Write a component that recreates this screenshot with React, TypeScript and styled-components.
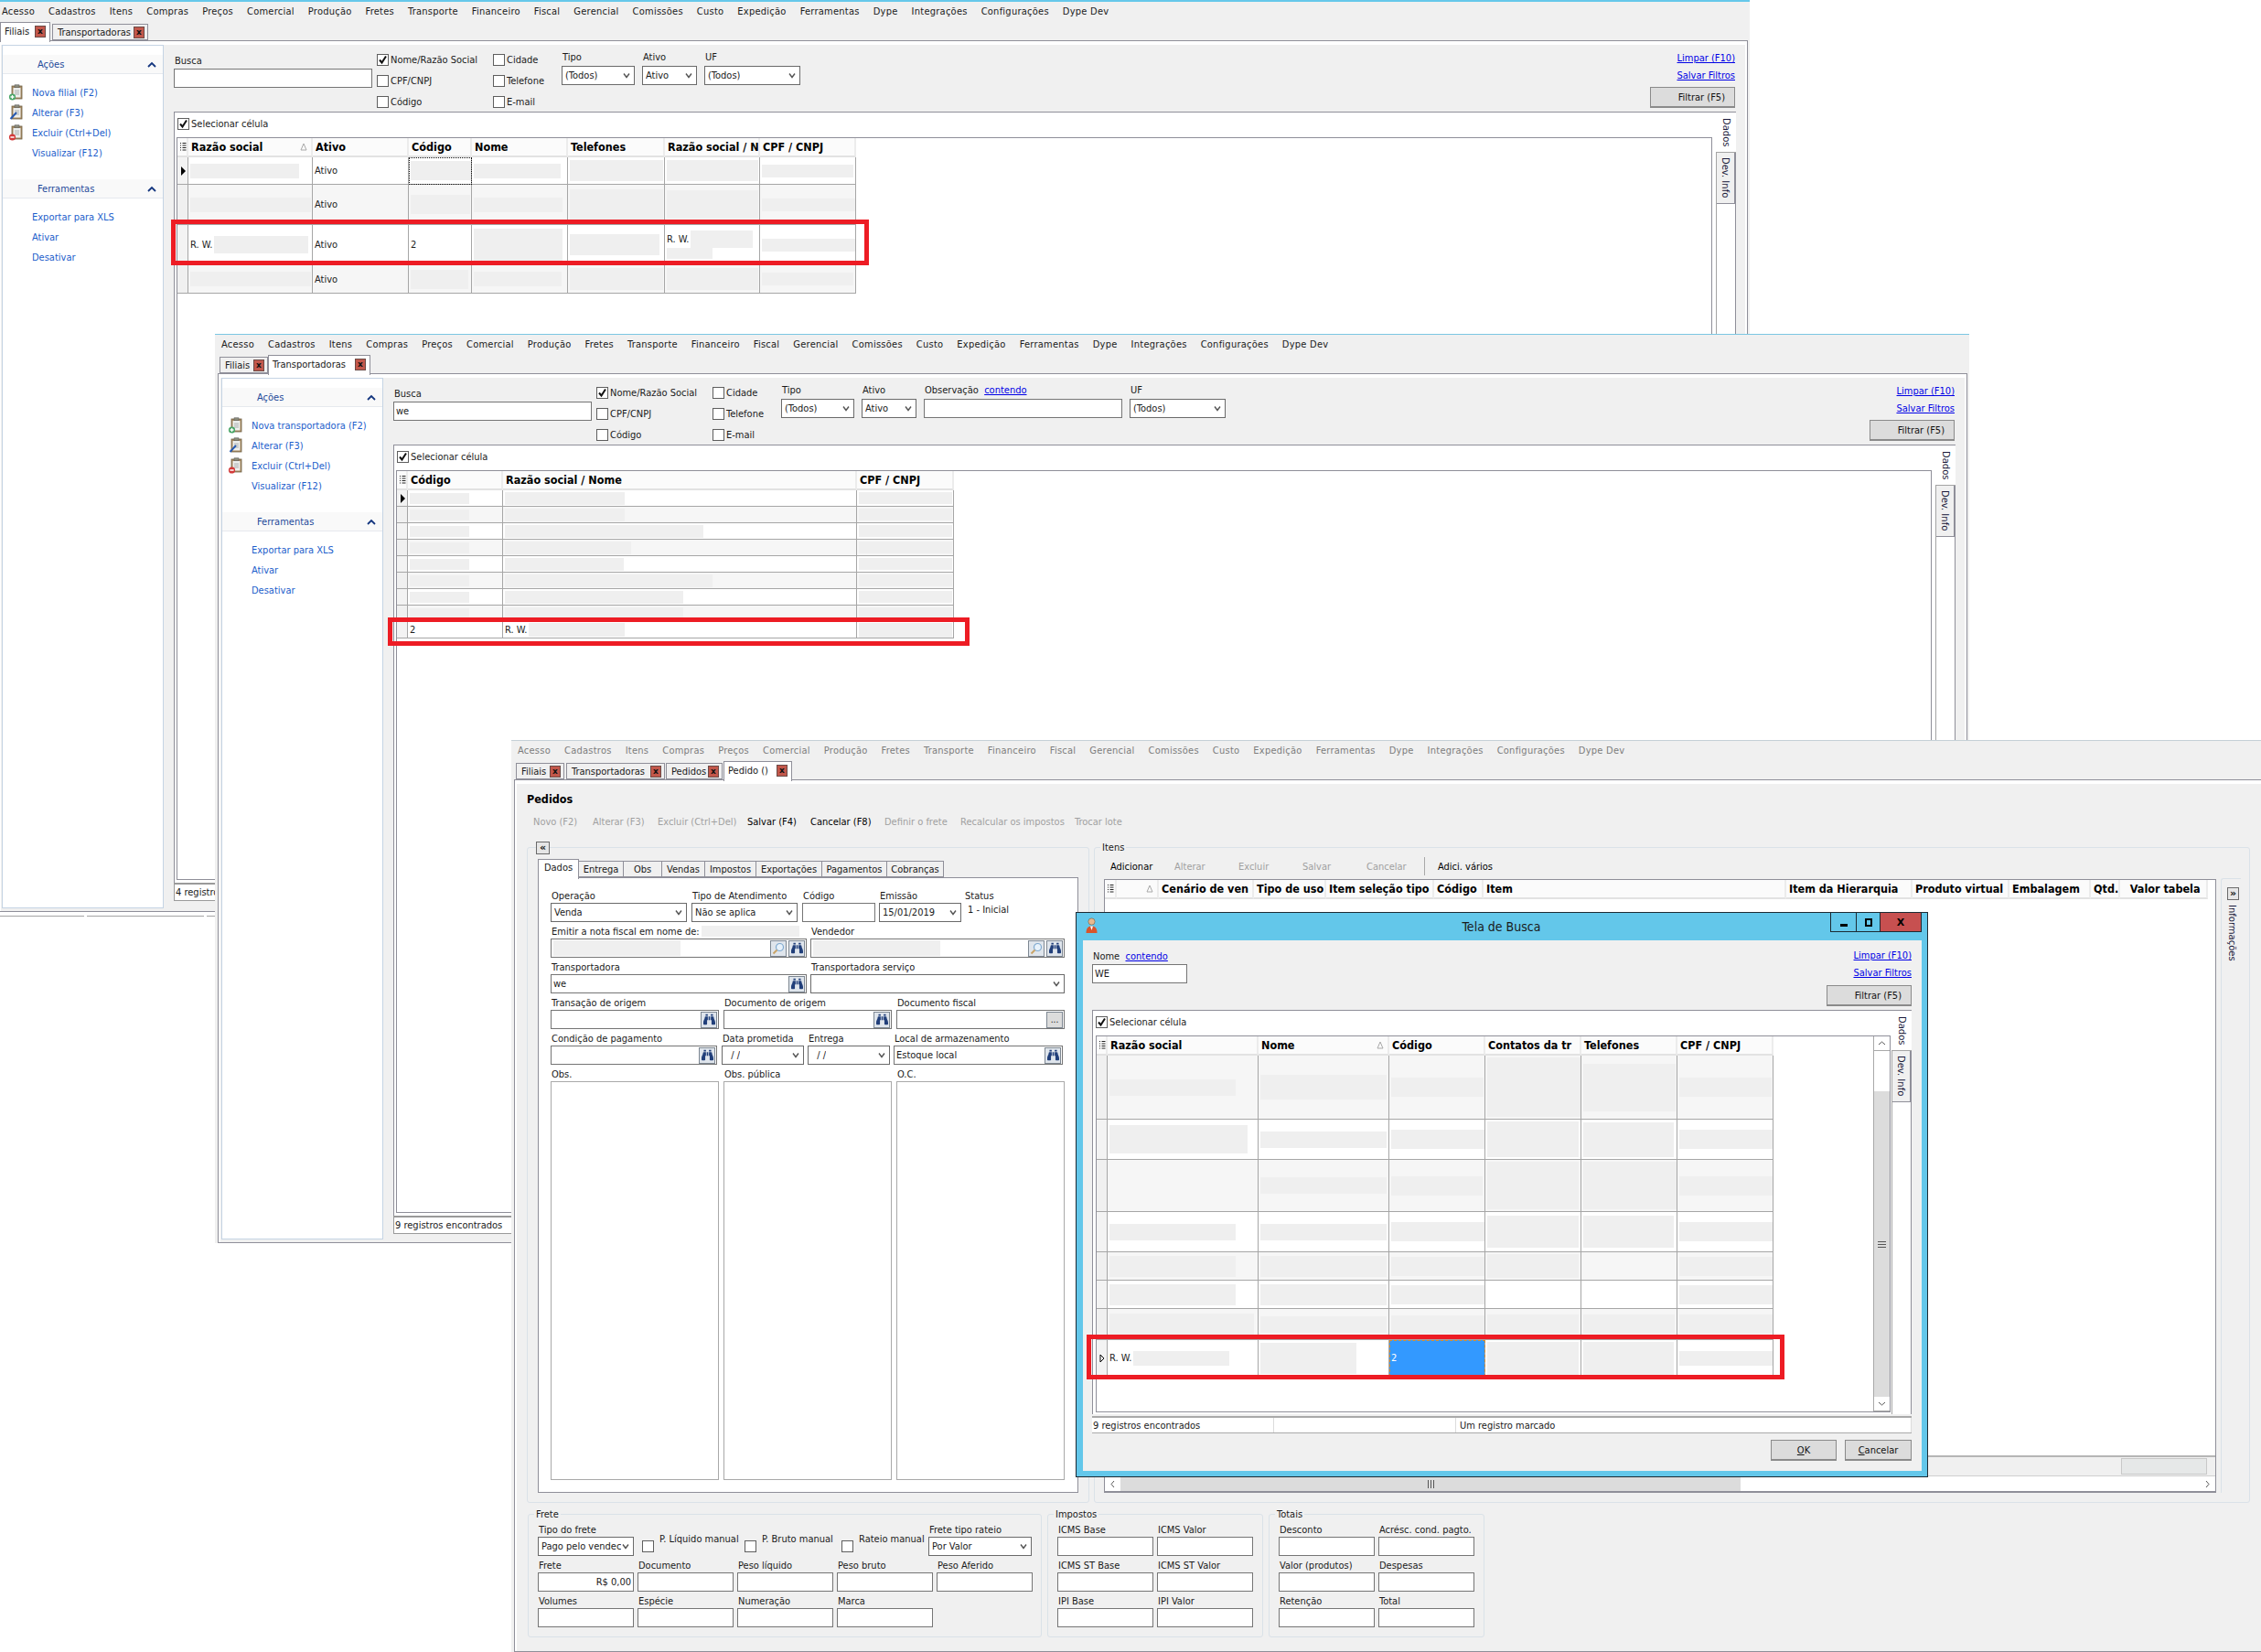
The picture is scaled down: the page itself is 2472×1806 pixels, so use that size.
import React from 'react';
import styled, { createGlobalStyle } from 'styled-components';
import { FaBinoculars } from 'react-icons/fa';

const UI = `"DejaVu Sans Condensed", "DejaVu Sans", "Liberation Sans", sans-serif`;
const LINE = '#8f8f99';

const Global = createGlobalStyle`
  html, body { margin: 0; padding: 0; width: 2472px; height: 1806px; overflow: hidden; background: #fff; }
  body { font: 11px ${UI}; color: #1a1a1a; }
  * { box-sizing: border-box; }
`;

const Desktop = styled.div`position: relative; width: 2472px; height: 1806px; overflow: hidden;`;

const Win = styled.section<{ $x: number; $y: number; $h: number; $bar: number; $barColor: string }>`
  position: absolute; left: ${p => p.$x}px; top: ${p => p.$y}px; width: 1918px; height: ${p => p.$h}px;
  background: #f0f0f0; border-top: ${p => p.$bar}px solid ${p => p.$barColor};
  display: flex; flex-direction: column; overflow: hidden;
`;
const MenuBar = styled.nav<{ $dim?: boolean }>`
  height: 21px; flex: none; display: flex; align-items: center; gap: 15px; padding-left: 7px; white-space: nowrap; letter-spacing: 0.25px;
  color: ${p => (p.$dim ? '#7d7d7d' : '#1a1a1a')};
`;
const TabStrip = styled.div`
  height: 21px; flex: none; display: flex; align-items: flex-end; padding-left: 5px; position: relative; z-index: 2;
`;
const Tab = styled.div<{ $w: number; $active?: boolean; $gap?: number }>`
  width: ${p => p.$w}px; height: ${p => (p.$active ? 22 : 18)}px; margin-bottom: ${p => (p.$active ? -2 : 0)}px;
  margin-right: ${p => p.$gap ?? 0}px; padding: ${p => (p.$active ? '0 4px 3px 4px' : '0 3px 0 5px')};
  display: flex; align-items: center; justify-content: space-between; white-space: nowrap; flex: none;
  border: 1px solid ${LINE}; border-bottom: ${p => (p.$active ? 'none' : `1px solid ${LINE}`)};
  background: ${p => (p.$active ? '#fff' : '#f0f0f0')};
`;
const CloseBox = styled.span`
  width: 12px; height: 13px; flex: none; background: #c2574b; border: 1px solid #6b4a46; color: #111;
  font: bold 9px/10px "DejaVu Sans", sans-serif; text-align: center;
`;
const Frame = styled.div<{ $noBottom?: boolean }>`
  flex: 1; min-height: 0; width: 1913px; margin-left: 3px; border: 1px solid ${LINE};
  border-bottom: ${p => (p.$noBottom ? 'none' : `1px solid ${LINE}`)};
  background: #fff; padding: 4px 2px 0 2px; display: flex;
`;
const FrameInner = styled.div`flex: 1; min-width: 0; background: #f0f0f0; display: flex; padding-left: 1px;`;
const FootRow = styled.div`height: 5px; flex: none; background: #fff; display: grid; grid-template-columns: 97px 128px 1fr; gap: 3px;`;
const FootCell = styled.div`border-bottom: 1px solid #a4a4a4; height: 5px;`;

/* side panel */
const SidePanel = styled.aside`
  width: 177px; flex: none; margin-bottom: 3px; background: #fff; border: 1px solid #c5d4e4; padding-top: 10px;
`;
const PanelHead = styled.div<{ $gapTop?: number }>`
  height: 21px; margin-top: ${p => p.$gapTop ?? 0}px; background: #f9f9f9; border-bottom: 1px solid #e6e9ee;
  display: flex; align-items: center; justify-content: space-between; padding: 0 7px 0 38px; color: #1f4a9a;
`;
const LinkList = styled.div`padding-top: 9px;`;
const SideLink = styled.a`
  height: 22px; display: flex; align-items: center; color: #1c5ecb; white-space: nowrap; position: relative; padding-left: 32px;
`;
const LinkIcon = styled.svg`position: absolute; left: 6px; top: 2px;`;

function ClipIcon({ kind }: { kind: 'add' | 'edit' | 'del' }) {
  return (
    <LinkIcon width="17" height="18" viewBox="0 0 17 18">
      <rect x="4" y="2" width="11" height="14" fill="#a98b62" stroke="#6f6147" strokeWidth="0.8" />
      <rect x="5.5" y="4" width="8" height="10.5" fill="#eef0ee" />
      <rect x="7" y="0.8" width="5" height="3" fill="#8c8c7c" stroke="#555" strokeWidth="0.5" />
      <path d="M7 7h5M7 9h5M7 11h5" stroke="#9aa0a0" strokeWidth="0.8" />
      {kind === 'add' && <><circle cx="4.5" cy="14" r="3.6" fill="#4aa668" /><path d="M2.5 14h4M4.5 12v4" stroke="#fff" strokeWidth="1.3" /></>}
      {kind === 'del' && <><circle cx="4.5" cy="14" r="3.6" fill="#d33a3a" /><path d="M2.4 14h4.2" stroke="#fff" strokeWidth="1.5" /></>}
      {kind === 'edit' && <path d="M9 9L2.5 16" stroke="#2458b0" strokeWidth="2" />}
    </LinkIcon>
  );
}
const Chevron = () => (
  <svg width="10" height="7" viewBox="0 0 10 7"><path d="M1 6l4-4 4 4" fill="none" stroke="#14367f" strokeWidth="1.8" /></svg>
);

/* filter bar */
const MainCol = styled.main`width: 1708px; flex: none; margin-left: 11px;`;
const FilterBar = styled.div`height: 73px; display: flex; align-items: flex-start;`;
const BuscaField = styled.div`width: 217px; padding-top: 11px; margin-right: 5px; flex: none;`;
const Lbl = styled.div`height: 14px; line-height: 14px; white-space: nowrap; padding-left: 1px;`;
const TextBox = styled.div<{ $w?: number; $h?: number; $right?: boolean; $light?: boolean }>`
  width: ${p => (p.$w ? `${p.$w}px` : '100%')}; height: ${p => p.$h ?? 21}px; background: #fff;
  border: 1px solid ${p => (p.$light ? '#a9a9a9' : '#757575')}; display: flex; align-items: center;
  justify-content: ${p => (p.$right ? 'flex-end' : 'flex-start')}; padding: 0 2px; white-space: nowrap; overflow: hidden; flex: none;
`;
const CheckGrid = styled.div`
  padding-top: 5px; flex: none; display: grid; grid-template-columns: 127px 75px; grid-auto-rows: 23px;
`;
const CheckLine = styled.label`display: flex; align-items: center; gap: 2px; white-space: nowrap;`;
const Box = styled.span`
  width: 13px; height: 13px; flex: none; background: #fff; border: 1px solid #5e5e5e; display: inline-flex; align-items: center; justify-content: center;
`;
const Tick = () => (
  <svg width="11" height="11" viewBox="0 0 11 11"><path d="M2 5.5l2.5 3L9 1.5" fill="none" stroke="#111" strokeWidth="2" /></svg>
);
const Check = ({ on }: { on?: boolean }) => <Box>{on && <Tick />}</Box>;
const SelField = styled.div<{ $w: number; $mr?: number }>`
  width: ${p => p.$w}px; margin-right: ${p => p.$mr ?? 8}px; padding-top: 7px; flex: none;
`;
const LblRow = styled.div`height: 16px; line-height: 14px; white-space: nowrap; padding-left: 1px;`;
const BuscaLbl = styled(LblRow)`height: 15px;`;
const SelBox = styled.div<{ $h?: number }>`
  height: ${p => p.$h ?? 21}px; background: #fff; border: 1px solid #6a6a6a; display: flex; align-items: center;
  justify-content: space-between; gap: 1px; padding: 0 4px 0 3px; white-space: nowrap; overflow: hidden; flex: none;
`;
const SelText = styled.span`min-width: 0; overflow: hidden;`;
const Caret = () => (
  <svg width="8" height="7" viewBox="0 0 8 7" style={{ flex: 'none' }}><path d="M1 1.5l3 4 3-4" fill="none" stroke="#555" strokeWidth="1.4" /></svg>
);
const Sel = ({ v, h }: { v?: string; h?: number }) => (
  <SelBox $h={h}><SelText>{v}</SelText><Caret /></SelBox>
);
const LinkU = styled.a`color: #0000e6; text-decoration: underline; white-space: nowrap;`;
const RightTools = styled.div<{ $mr?: number }>`
  margin-left: auto; margin-right: ${p => p.$mr ?? 1}px; padding-top: 5px; display: flex; flex-direction: column; align-items: flex-end; flex: none;
`;
const ToolLink = styled.div`height: 19px; display: flex; align-items: center;`;
const Btn = styled.button<{ $w: number; $h?: number; $mt?: number }>`
  width: ${p => p.$w}px; height: ${p => p.$h ?? 23}px; margin-top: ${p => p.$mt ?? 3}px; background: #dcdcdc; border: 1px solid #8a8a8a;
  border-bottom-width: 2px; font: 11px ${UI}; color: #111; padding: 0; flex: none;
`;
const FilterBtn = styled(Btn)`text-align: right; padding-right: 10px;`;

/* grid panel */
const GridPanel = styled.div<{ $h: number }>`
  height: ${p => p.$h}px; background: #fff; border: 1px solid ${LINE}; border-bottom: none; display: flex;
`;
const GridCol = styled.div`flex: 1; min-width: 0; display: flex; flex-direction: column; padding-bottom: 3px;`;
const SelectRow = styled.div`height: 27px; flex: none; display: flex; align-items: center; gap: 2px; padding: 0 0 3px 3px;`;
const TableFrame = styled.div`
  flex: 1; min-height: 0; margin: 0 4px 0 2px; border: 1px solid ${LINE}; background: #fff; overflow: hidden; position: relative;
`;
const SideStrip = styled.div`width: 21px; flex: none; border-left: 1px solid #a4a4a4; display: flex; flex-direction: column; align-items: flex-start;`;
const VTab = styled.div<{ $active?: boolean; $h: number }>`
  writing-mode: vertical-rl; font: 10px "DejaVu Sans", sans-serif; height: ${p => p.$h}px; display: flex; align-items: center; justify-content: center;
  width: ${p => (p.$active ? 22 : 20)}px; margin-left: ${p => (p.$active ? -1 : 0)}px;
  background: ${p => (p.$active ? '#fff' : '#f0f0f0')}; color: #1a1a3a; flex: none;
  border-bottom: 1px solid ${p => (p.$active ? '#a4a4a4' : LINE)}; border-right: ${p => (p.$active ? 'none' : `1px solid ${LINE}`)};
`;
const StatusBar = styled.div`
  height: 20px; margin-top: 0; background: #fff; border-top: 2px solid #9a9a9a; border-bottom: 1px solid #9a9a9a; border-left: 1px solid #9a9a9a;
  display: flex; align-items: center; padding-left: 1px;
`;

/* tables */
const Row = styled.div<{ $cols: string; $h: number }>`
  display: grid; grid-template-columns: ${p => p.$cols}; height: ${p => p.$h}px; width: max-content;
`;
const HeadCell = styled.div`
  background: #fbfbfb; border-right: 2px solid #ececec; border-bottom: 2px solid #e2e2e2; display: flex; align-items: center; justify-content: space-between;
  padding: 0 4px 0 3px; font: bold 12.5px ${UI}; color: #000; white-space: nowrap; overflow: hidden;
`;
const HeadMark = styled(HeadCell)`padding: 0 0 0 3px; justify-content: flex-start;`;
const Indicator = styled.div<{ $alt?: boolean }>`
  background: ${p => (p.$alt ? '#f0f0f0' : '#f3f3f3')}; border-right: 1px solid #a6a6a6; border-bottom: 1px solid #a6a6a6;
  display: flex; align-items: center; justify-content: center;
`;
const DataCell = styled.div<{ $alt?: boolean; $sel?: boolean; $focus?: boolean }>`
  background: ${p => (p.$sel ? '#3399ff' : p.$alt ? '#f6f6f6' : '#fff')}; color: ${p => (p.$sel ? '#fff' : '#222')};
  border-right: 1px solid #a6a6a6; border-bottom: 1px solid #a6a6a6; display: flex; flex-wrap: wrap; align-items: center; align-content: center;
  padding-left: 2px; overflow: hidden; white-space: nowrap; column-gap: 2px;
  outline: ${p => (p.$sel ? '1px dashed #d98b2a' : p.$focus ? '1px dotted #111' : 'none')}; outline-offset: -1px;
`;
const Redact = styled.span<{ $w: number; $h: number }>`
  display: block; flex: none; width: ${p => p.$w}px; height: ${p => p.$h}px; background: #efefef;
`;
const MarkIcon = () => (
  <svg width="7" height="11" viewBox="0 0 7 11"><path d="M0 1.5h1M0 4h1M0 6.5h1M0 9h1M2.5 1.5h4M2.5 4h4M2.5 6.5h4M2.5 9h4" stroke="#222" /></svg>
);
const SortIcon = () => (
  <svg width="8" height="9" viewBox="0 0 8 9" style={{ flex: 'none' }}><path d="M4 1L7 8H1z" fill="none" stroke="#a9a9a9" /></svg>
);
const CurSolid = () => <svg width="6" height="10" viewBox="0 0 6 10"><path d="M1 0l5 5-5 5z" fill="#000" /></svg>;
const CurOutline = () => <svg width="6" height="10" viewBox="0 0 6 10"><path d="M1 1l4 4-4 4z" fill="#fff" stroke="#000" /></svg>;

type Cell = { t?: string; b?: [number, number][]; sel?: boolean; focus?: boolean };
type TRow = { h: number; alt?: boolean; cur?: 'solid' | 'outline'; cells: Cell[] };
const r = (w: number, h: number): Cell => ({ b: [[w, h]] });

function DataTable({ sel, cols, heads, rows }: { sel: number; cols: number[]; heads: { t: string; s?: boolean }[]; rows: TRow[] }) {
  const tpl = [sel, ...cols].map(n => `${n}px`).join(' ');
  return (
    <>
      <Row $cols={tpl} $h={21}>
        <HeadMark><MarkIcon /></HeadMark>
        {heads.map((h, i) => <HeadCell key={i}><span>{h.t}</span>{h.s && <SortIcon />}</HeadCell>)}
      </Row>
      {rows.map((row, i) => (
        <Row key={i} $cols={tpl} $h={row.h}>
          <Indicator $alt={row.alt}>{row.cur === 'solid' ? <CurSolid /> : row.cur === 'outline' ? <CurOutline /> : null}</Indicator>
          {row.cells.map((c, j) => (
            <DataCell key={j} $alt={row.alt} $sel={c.sel} $focus={c.focus}>
              {c.t && <span>{c.t}</span>}
              {c.b?.map((b, k) => <Redact key={k} $w={b[0]} $h={b[1]} />)}
            </DataCell>
          ))}
        </Row>
      ))}
    </>
  );
}

const ativo: Cell = { t: 'Ativo' };
const T1_ROWS: TRow[] = [
  { h: 30, cur: 'solid', cells: [r(119, 16), ativo, { b: [[66, 21]], focus: true }, r(95, 16), r(102, 23), r(100, 23), r(100, 14)] },
  { h: 44, alt: true, cells: [r(132, 16), ativo, r(65, 21), r(97, 16), r(102, 33), r(100, 31), r(102, 14)] },
  { h: 44, cells: [{ t: 'R. W.', b: [[103, 19]] }, ativo, { t: '2' }, r(97, 36), r(98, 23), { t: 'R. W.', b: [[68, 19], [50, 12]] }, r(102, 14)] },
  { h: 31, alt: true, cells: [r(132, 16), ativo, r(63, 21), r(96, 16), r(102, 24), r(100, 24), r(100, 14)] },
];
const T2_W = [131, 131, 217, 138, 130, 227, 195, 195];
const T2_ROWS: TRow[] = [
  ...T2_W.map((w, i): TRow => ({
    h: 18, alt: i % 2 === 1, cur: i === 0 ? 'solid' : undefined,
    cells: [r(65, 12), r(w, 14), r(102, 13)],
  })),
  { h: 18, cells: [{ t: '2' }, { t: 'R. W.', b: [[105, 15]] }, r(102, 16)] },
];
const T3_ROWS: TRow[] = [
  { h: 70, alt: true, cells: [r(138, 18), r(138, 27), r(101, 21), r(102, 65), r(101, 52), r(101, 21)] },
  { h: 44, cells: [r(151, 31), r(138, 18), r(102, 21), r(100, 39), r(99, 38), r(102, 21)] },
  { h: 57, alt: true, cells: [{}, r(138, 18), r(100, 21), r(100, 52), r(102, 52), r(102, 21)] },
  { h: 44, cells: [r(138, 18), r(138, 18), r(102, 21), r(100, 35), r(99, 35), r(102, 21)] },
  { h: 31, alt: true, cells: [r(138, 23), r(138, 23), r(102, 21), r(100, 26), {}, r(102, 21)] },
  { h: 31, cells: [r(138, 23), r(138, 23), r(102, 21), {}, {}, r(102, 21)] },
  { h: 34, alt: true, cells: [r(158, 24), r(138, 18), r(102, 20), r(100, 21), r(100, 21), r(102, 21)] },
  { h: 40, cur: 'outline', cells: [{ t: 'R. W.', b: [[105, 16]] }, r(105, 34), { t: '2', sel: true }, r(100, 36), r(99, 36), r(102, 16)] },
];

const MENU = ['Acesso', 'Cadastros', 'Itens', 'Compras', 'Preços', 'Comercial', 'Produção', 'Fretes', 'Transporte', 'Financeiro', 'Fiscal', 'Gerencial', 'Comissões', 'Custo', 'Expedição', 'Ferramentas', 'Dype', 'Integrações', 'Configurações', 'Dype Dev'];
const Menu = ({ dim }: { dim?: boolean }) => <MenuBar $dim={dim}>{MENU.map(m => <span key={m}>{m}</span>)}</MenuBar>;
const Tabs = ({ items }: { items: { t: string; w: number; a?: boolean; g?: number }[] }) => (
  <TabStrip>
    {items.map(i => <Tab key={i.t} $w={i.w} $active={i.a} $gap={i.g}><span>{i.t}</span><CloseBox>x</CloseBox></Tab>)}
  </TabStrip>
);
const SideTabs = () => (
  <SideStrip>
    <VTab $active $h={44}>Dados</VTab>
    <VTab $h={56}>Dev. Info</VTab>
  </SideStrip>
);

function ListWin({ x, y, h, bar, barColor, tabs, newLabel, busca, obs, status, cols, heads, rows, foot, noBottom }: {
  x: number; y: number; h: number; bar: number; barColor: string; tabs: { t: string; w: number; a?: boolean; g?: number }[];
  newLabel: string; busca?: string; obs?: boolean; status: string; cols: number[]; heads: { t: string; s?: boolean }[]; rows: TRow[]; foot?: boolean; noBottom?: boolean;
}) {
  return (
    <Win $x={x} $y={y} $h={h} $bar={bar} $barColor={barColor}>
      <Menu />
      <Tabs items={tabs} />
      <Frame $noBottom={noBottom}>
        <FrameInner>
          <SidePanel>
            <PanelHead><span>Ações</span><Chevron /></PanelHead>
            <LinkList>
              <SideLink><ClipIcon kind="add" />{newLabel}</SideLink>
              <SideLink><ClipIcon kind="edit" />Alterar (F3)</SideLink>
              <SideLink><ClipIcon kind="del" />Excluir (Ctrl+Del)</SideLink>
              <SideLink>Visualizar (F12)</SideLink>
            </LinkList>
            <PanelHead $gapTop={18}><span>Ferramentas</span><Chevron /></PanelHead>
            <LinkList>
              <SideLink>Exportar para XLS</SideLink>
              <SideLink>Ativar</SideLink>
              <SideLink>Desativar</SideLink>
            </LinkList>
          </SidePanel>
          <MainCol>
            <FilterBar>
              <BuscaField>
                <BuscaLbl>Busca</BuscaLbl>
                <TextBox>{busca}</TextBox>
              </BuscaField>
              <CheckGrid>
                <CheckLine><Check on />Nome/Razão Social</CheckLine><CheckLine><Check />Cidade</CheckLine>
                <CheckLine><Check />CPF/CNPJ</CheckLine><CheckLine><Check />Telefone</CheckLine>
                <CheckLine><Check />Código</CheckLine><CheckLine><Check />E-mail</CheckLine>
              </CheckGrid>
              <SelField $w={80}><LblRow>Tipo</LblRow><Sel v="(Todos)" /></SelField>
              <SelField $w={60}><LblRow>Ativo</LblRow><Sel v="Ativo" /></SelField>
              {obs && (
                <SelField $w={217}>
                  <LblRow>Observação&nbsp; <LinkU>contendo</LinkU></LblRow>
                  <TextBox />
                </SelField>
              )}
              <SelField $w={105}><LblRow>UF</LblRow><Sel v="(Todos)" /></SelField>
              <RightTools>
                <ToolLink><LinkU>Limpar (F10)</LinkU></ToolLink>
                <ToolLink><LinkU>Salvar Filtros</LinkU></ToolLink>
                <FilterBtn $w={93}>Filtrar (F5)</FilterBtn>
              </RightTools>
            </FilterBar>
            <GridPanel $h={843}>
              <GridCol>
                <SelectRow><Check on />Selecionar célula</SelectRow>
                <TableFrame>
                  <DataTable sel={12} cols={cols} heads={heads} rows={rows} />
                </TableFrame>
              </GridCol>
              <SideTabs />
            </GridPanel>
            <StatusBar>{status}</StatusBar>
          </MainCol>
        </FrameInner>
      </Frame>
      {foot && <FootRow><FootCell /><FootCell /><FootCell /></FootRow>}
    </Win>
  );
}

/* order window */
const OrderBody = styled.div`flex: 1; min-width: 0; background: #f0f0f0; padding: 8px 0 0 11px; display: flex; flex-direction: column;`;
const OrderTitle = styled.h1`margin: 0; font: bold 12.5px/18px ${UI}; color: #000;`;
const ToolBar = styled.div<{ $ml?: number; $mt?: number }>`
  height: 20px; flex: none; margin: ${p => p.$mt ?? 5}px 0 0 ${p => p.$ml ?? 7}px; display: flex; align-items: center; white-space: nowrap;
`;
const ToolItem = styled.span<{ $w: number; $on?: boolean }>`
  width: ${p => p.$w}px; flex: none; color: ${p => (p.$on ? '#000' : '#a0a0a0')};
`;
const ToolSep = styled.span`width: 1px; height: 20px; background: #a9a9a9; margin: 0 14px 0 -7px; flex: none;`;
const Sets = styled.div`display: flex; gap: 5px; margin-top: 18px; height: 717px; flex: none;`;
const FieldSet = styled.section<{ $w: number; $h?: number; $pad?: string }>`
  position: relative; width: ${p => p.$w}px; ${p => (p.$h ? `height: ${p.$h}px;` : '')} flex: none;
  border: 1px solid #dae2e8; border-radius: 3px; padding: ${p => p.$pad ?? '12px 10px'};
`;
const Legend = styled.span`position: absolute; left: 6px; top: -7px; padding: 0 2px; background: #f0f0f0; line-height: 14px;`;
const Collapse = styled.span`
  position: absolute; left: 9px; top: -7px; width: 15px; height: 14px; background: #e6e6e6; border: 1px solid #6a6a6a;
  display: flex; align-items: center; justify-content: center; font: bold 11px/10px "DejaVu Sans", sans-serif; color: #111;
`;
const FormTabs = styled.div`height: 20px; display: flex; align-items: flex-end; position: relative; z-index: 1;`;
const FormTab = styled.div<{ $w: number; $active?: boolean }>`
  width: ${p => p.$w}px; height: ${p => (p.$active ? 22 : 18)}px; margin-bottom: ${p => (p.$active ? -2 : 0)}px; flex: none;
  border: 1px solid ${LINE}; border-bottom: ${p => (p.$active ? 'none' : `1px solid ${LINE}`)}; border-left: ${p => (p.$active ? `1px solid ${LINE}` : 'none')};
  background: ${p => (p.$active ? '#fff' : '#f0f0f0')}; display: flex; align-items: center; justify-content: center; padding-bottom: ${p => (p.$active ? 4 : 0)}px;
`;
const FormBody = styled.div`
  width: 591px; height: 673px; background: #fff; border: 1px solid ${LINE}; padding: 13px 0 0 13px;
`;
const FormRow = styled.div<{ $mb?: number }>`display: flex; margin-bottom: ${p => p.$mb ?? 4}px;`;
const Fld = styled.div<{ $w: number; $mr?: number }>`
  width: ${p => p.$w}px; margin-right: ${p => p.$mr ?? 5}px; flex: none;
`;
const LblInline = styled(Lbl)`display: flex; gap: 2px; padding-left: 0;`;
const Value = styled.div`height: 17px; line-height: 16px; padding-left: 4px; white-space: nowrap;`;
const IconBtn = styled.span`
  width: 18px; height: 18px; flex: none; background: #dfe5ec; border: 1px solid #7d8792; display: inline-flex; align-items: center; justify-content: center; color: #213f7a;
`;
const Spacer = styled.span`flex: 1; min-width: 0; display: flex; align-items: center; overflow: hidden;`;
const Bino = () => <IconBtn><FaBinoculars size={13} /></IconBtn>;
const Lens = () => (
  <IconBtn>
    <svg width="14" height="14" viewBox="0 0 14 14"><circle cx="8.5" cy="5.5" r="4" fill="#e8f2fb" stroke="#7fa9cf" strokeWidth="1.2" /><path d="M5.5 8.5L1.5 12.5" stroke="#c9a468" strokeWidth="2" /></svg>
  </IconBtn>
);
const Dots = styled(IconBtn)`background: #dcdcdc; color: #222; font-size: 10px; line-height: 10px;`;
const LookupBox = styled(TextBox)`padding: 0 1px 0 2px; gap: 2px;`;
const Area = styled.div<{ $w: number; $mr?: number }>`
  width: ${p => p.$w}px; height: 436px; margin-right: ${p => p.$mr ?? 5}px; background: #fff; border: 1px solid #a9a9a9; flex: none;
`;
const BottomSets = styled.div`display: flex; margin: 12px 0 0 1px;`;
const InlineCheck = styled.div<{ $w: number }>`
  width: ${p => p.$w}px; flex: none; display: flex; gap: 6px; height: 35px; white-space: nowrap; position: relative; align-items: flex-start;
`;
const InlineBox = styled.span`margin-top: 18px; display: flex;`;
const InlineText = styled.span`margin-top: 10px; line-height: 14px;`;
const ItemsGrid = styled.div`
  width: 1216px; height: 671px; margin-top: 4px; border-top: 1px solid ${LINE}; border-left: 1px solid ${LINE}; border-right: 1px solid ${LINE}; border-bottom: 2px solid ${LINE};
  background: #fff; display: flex; flex-direction: column;
`;
const ItemsBody = styled.div`flex: 1; min-height: 0;`;
const ItemsFoot = styled.div`height: 22px; flex: none; background: #f0f0f0; border-top: 2px solid #b5b5b5; display: flex; justify-content: flex-end; padding: 1px 9px 0 0;`;
const FootBox = styled.span`width: 94px; height: 18px; background: #e6e8e8; border: 1px solid #c8c8c8;`;
const HScroll = styled.div`height: 17px; flex: none; display: grid; grid-template-columns: 17px 678px 1fr 17px; border-top: 1px solid #cfcfcf;`;
const ScrollBtn = styled.span`display: flex; align-items: center; justify-content: center; background: #fff; color: #555;`;
const ScrollThumb = styled.span`background: #dcdcdc; display: flex; align-items: center; justify-content: center; color: #555;`;
const Grip = ({ v }: { v?: boolean }) => (
  <svg width="9" height="9" viewBox="0 0 9 9">
    <path d={v ? 'M0 1.5h9M0 4.5h9M0 7.5h9' : 'M1.5 0v9M4.5 0v9M7.5 0v9'} stroke="#555" />
  </svg>
);
const Arrow = ({ d }: { d: 'l' | 'r' | 'u' | 'd' }) => (
  <svg width="9" height="9" viewBox="0 0 9 9">
    <path d={{ l: 'M6 1L3 4.5 6 8', r: 'M3 1l3 3.5L3 8', u: 'M1 6l3.5-3L8 6', d: 'M1 3l3.5 3L8 3' }[d]} fill="none" stroke="#555" />
  </svg>
);
const ItemsWrap = styled.div`display: flex; align-items: flex-start;`;
const InfoStrip = styled.div`
  width: 22px; height: 672px; margin: 3px 0 0 5px; border-left: 1px solid #dae2e8; border-top: 1px solid #dae2e8; border-top-left-radius: 3px;
  display: flex; flex-direction: column; align-items: flex-start; padding: 9px 0 0 6px; flex: none;
`;
const InfoBtn = styled.span`
  width: 13px; height: 14px; background: #e6e6e6; border: 1px solid #6a6a6a; display: flex; align-items: center; justify-content: center; font: bold 11px/10px "DejaVu Sans", sans-serif; color: #111;
`;
const InfoText = styled.span`writing-mode: vertical-rl; font: 10px "DejaVu Sans", sans-serif; color: #1a1a3a; margin-top: 5px; margin-left: 0;`;

/* dialog */
const Dialog = styled.div`
  position: absolute; left: 1176px; top: 997px; width: 932px; height: 618px; background: #63c7ea; border: 1px solid #1c2a33; z-index: 5;
  display: flex; flex-direction: column; padding: 0 6px 6px 7px;
`;
const TitleBar = styled.div`height: 30px; flex: none; display: grid; grid-template-columns: 1fr auto 1fr; align-items: start;`;
const TitleText = styled.div`font: 14px/30px ${UI}; color: #1a1a1a; margin-left: -2px;`;
const TitleIcon = styled.svg`margin: 5px 0 0 2px;`;
const WinBtns = styled.div`justify-self: end; display: flex; height: 21px;`;
const WinBtn = styled.span<{ $w: number; $close?: boolean }>`
  width: ${p => p.$w}px; height: 21px; border: 1px solid #1c2a33; border-top: none; margin-left: -1px; display: flex; align-items: center; justify-content: center;
  background: ${p => (p.$close ? '#c75050' : '#63c7ea')}; color: #000; font: bold 11px "DejaVu Sans", sans-serif;
`;
const MinMark = styled.span`width: 8px; height: 3px; background: #000; margin-top: 6px;`;
const MaxMark = styled.span`width: 8px; height: 9px; border: 2px solid #000;`;
const Client = styled.div`flex: 1; min-height: 0; background: #f0f0f0; padding: 0 11px 0 10px; display: flex; flex-direction: column;`;
const DlgHead = styled.div`height: 76px; flex: none; display: flex; align-items: flex-start;`;
const DlgField = styled.div`width: 104px; padding-top: 11px;`;
const DlgRight = styled.div`margin-left: auto; padding-top: 7px; display: flex; flex-direction: column; align-items: flex-end;`;
const DlgPanel = styled.div`height: 442px; flex: none; background: #fff; border: 1px solid ${LINE}; border-bottom: none; display: flex;`;
const DlgGridCol = styled.div`flex: 1; min-width: 0; display: flex; flex-direction: column; padding-bottom: 2px;`;
const DlgSelect = styled(SelectRow)`height: 27px; padding: 0 0 3px 3px;`;
const DlgFrame = styled.div`flex: 1; min-height: 0; margin: 0 1px 0 3px; border: 1px solid ${LINE}; display: flex; background: #fff; justify-content: space-between;`;
const DlgCols = styled.div`min-width: 0;`;
const VScroll = styled.div`width: 18px; flex: none; border-left: 1px solid #a9a9a9; display: flex; flex-direction: column;`;
const VBtn = styled(ScrollBtn)`height: 16px; flex: none; border-bottom: 1px solid #a9a9a9;`;
const VTrack = styled.span`height: 44px; flex: none;`;
const VThumb = styled(ScrollThumb)`flex: 1;`;
const DlgStatus = styled.div`
  height: 19px; flex: none; margin-top: 2px; background: #fff; border-top: 2px solid #a9a9a9; border-bottom: 1px solid #a9a9a9;
  display: grid; grid-template-columns: 199px 199px 1fr; align-items: center;
`;
const StatusCell = styled.span<{ $div?: boolean }>`
  height: 100%; display: flex; align-items: center; padding-left: ${p => (p.$div ? 4 : 1)}px; border-right: 1px solid #dcdcdc; white-space: nowrap;
`;
const DlgActions = styled.div`display: flex; justify-content: flex-end; gap: 9px; margin-top: 7px;`;
const ActionBtn = styled(Btn)`margin-top: 0;`;
const PersonIcon = () => (
  <TitleIcon width="15" height="18" viewBox="0 0 15 18">
    <circle cx="7.5" cy="4.5" r="3.6" fill="#e9b98f" stroke="#7a5a3a" strokeWidth="0.6" />
    <path d="M1.5 17c0-5 2-7.5 6-7.5s6 2.5 6 7.5z" fill="#d9542b" />
    <path d="M6 9.5h3L7.5 14z" fill="#fff" />
  </TitleIcon>
);

const Highlight = styled.div<{ $x: number; $y: number; $w: number; $h: number }>`
  position: absolute; left: ${p => p.$x}px; top: ${p => p.$y}px; width: ${p => p.$w}px; height: ${p => p.$h}px;
  border: 5px solid #ed1c24; z-index: 9; pointer-events: none;
`;
const SetGap = styled.span`width: 6px; flex: none;`;

const H1 = [{ t: 'Razão social', s: true }, { t: 'Ativo' }, { t: 'Código' }, { t: 'Nome' }, { t: 'Telefones' }, { t: 'Razão social / N' }, { t: 'CPF / CNPJ' }];
const H2 = [{ t: 'Código' }, { t: 'Razão social / Nome' }, { t: 'CPF / CNPJ' }];
const H3 = [{ t: 'Razão social' }, { t: 'Nome', s: true }, { t: 'Código' }, { t: 'Contatos da tr' }, { t: 'Telefones' }, { t: 'CPF / CNPJ' }];
const H4 = [{ t: '', s: true }, { t: 'Cenário de ven' }, { t: 'Tipo de uso' }, { t: 'Item seleção tipo' }, { t: 'Código' }, { t: 'Item' }, { t: 'Item da Hierarquia' }, { t: 'Produto virtual' }, { t: 'Embalagem' }, { t: 'Qtd.' }, { t: '\u00a0\u00a0Valor tabela' }];

const LabelBox = ({ w, mr, l, children, right }: { w: number; mr?: number; l: React.ReactNode; children?: React.ReactNode; right?: boolean }) => (
  <Fld $w={w} $mr={mr}><Lbl>{l}</Lbl><TextBox $right={right}>{children}</TextBox></Fld>
);
const LabelSel = ({ w, mr, l, v }: { w: number; mr?: number; l: React.ReactNode; v?: string }) => (
  <Fld $w={w} $mr={mr}><Lbl>{l}</Lbl><Sel v={v} /></Fld>
);
const LabelLookup = ({ w, mr, l, v, blk, btns }: { w: number; mr?: number; l: React.ReactNode; v?: string; blk?: number; btns: React.ReactNode }) => (
  <Fld $w={w} $mr={mr}><Lbl>{l}</Lbl>
    <LookupBox><Spacer>{blk ? <Redact $w={blk} $h={17} /> : v}</Spacer>{btns}</LookupBox>
  </Fld>
);
const ManualCheck = ({ w, t }: { w: number; t: string }) => (
  <InlineCheck $w={w}><InlineBox><Check /></InlineBox><InlineText>{t}</InlineText></InlineCheck>
);
const DATE_EMPTY = '\u00a0\u00a0/\u00a0/';

export default function App() {
  return (
    <Desktop>
      <Global />
      <ListWin x={-5} y={0} h={1002} bar={2} barColor="#66c8ea" foot
        tabs={[{ t: 'Filiais', w: 55, a: true, g: 2 }, { t: 'Transportadoras', w: 105 }]}
        newLabel="Nova filial (F2)" status="4 registros encontrados"
        cols={[136, 105, 69, 105, 106, 104, 105]} heads={H1} rows={T1_ROWS} />
      <ListWin x={235} y={365} h={994} bar={1} barColor="#7cc7e2"
        tabs={[{ t: 'Filiais', w: 53 }, { t: 'Transportadoras', w: 112, a: true }]}
        newLabel="Nova transportadora (F2)" busca="we" obs status="9 registros encontrados"
        cols={[104, 387, 106]} heads={H2} rows={T2_ROWS} />

      <Win $x={559} $y={809} $h={997} $bar={1} $barColor="#c5d0d6">
        <Menu dim />
        <Tabs items={[{ t: 'Filiais', w: 53, g: 2 }, { t: 'Transportadoras', w: 108, g: 1 }, { t: 'Pedidos', w: 62, g: 1 }, { t: 'Pedido ()', w: 75, a: true }]} />
        <Frame>
          <OrderBody>
            <OrderTitle>Pedidos</OrderTitle>
            <ToolBar>
              <ToolItem $w={65}>Novo (F2)</ToolItem>
              <ToolItem $w={71}>Alterar (F3)</ToolItem>
              <ToolItem $w={98}>Excluir (Ctrl+Del)</ToolItem>
              <ToolItem $w={69} $on>Salvar (F4)</ToolItem>
              <ToolItem $w={81} $on>Cancelar (F8)</ToolItem>
              <ToolItem $w={83}>Definir o frete</ToolItem>
              <ToolItem $w={125}>Recalcular os impostos</ToolItem>
              <ToolItem $w={70}>Trocar lote</ToolItem>
            </ToolBar>
            <Sets>
              <FieldSet $w={615} $pad="12px 0 0 11px">
                <Collapse>«</Collapse>
                <FormTabs>
                  <FormTab $w={45} $active>Dados</FormTab>
                  <FormTab $w={49}>Entrega</FormTab>
                  <FormTab $w={42}>Obs</FormTab>
                  <FormTab $w={47}>Vendas</FormTab>
                  <FormTab $w={56}>Impostos</FormTab>
                  <FormTab $w={72}>Exportações</FormTab>
                  <FormTab $w={71}>Pagamentos</FormTab>
                  <FormTab $w={62}>Cobranças</FormTab>
                </FormTabs>
                <FormBody>
                  <FormRow>
                    <LabelSel w={149} l="Operação" v="Venda" />
                    <LabelSel w={116} l="Tipo de Atendimento" v="Não se aplica" />
                    <LabelBox w={80} mr={4} l="Código" />
                    <LabelSel w={90} mr={3} l="Emissão" v="15/01/2019" />
                    <Fld $w={70}><Lbl>Status</Lbl><Value>1 - Inicial</Value></Fld>
                  </FormRow>
                  <FormRow>
                    <LabelLookup w={280} mr={4} l={<LblInline>Emitir a nota fiscal em nome de:<Redact $w={107} $h={12} /></LblInline>} blk={139} btns={<><Lens /><Bino /></>} />
                    <LabelLookup w={278} l="Vendedor" blk={139} btns={<><Lens /><Bino /></>} />
                  </FormRow>
                  <FormRow>
                    <LabelLookup w={280} mr={4} l="Transportadora" v="we" btns={<Bino />} />
                    <LabelSel w={278} l="Transportadora serviço" />
                  </FormRow>
                  <FormRow>
                    <LabelLookup w={184} l="Transação de origem" btns={<Bino />} />
                    <LabelLookup w={184} l="Documento de origem" btns={<Bino />} />
                    <LabelLookup w={184} l="Documento fiscal" btns={<Dots>...</Dots>} />
                  </FormRow>
                  <FormRow>
                    <LabelLookup w={182} l="Condição de pagamento" btns={<Bino />} />
                    <LabelSel w={90} mr={4} l="Data prometida" v={DATE_EMPTY} />
                    <LabelSel w={90} mr={4} l="Entrega" v={DATE_EMPTY} />
                    <LabelLookup w={185} l="Local de armazenamento" v="Estoque local" btns={<Bino />} />
                  </FormRow>
                  <FormRow $mb={0}>
                    <Fld $w={184}><Lbl>Obs.</Lbl><Area $w={184} $mr={0} /></Fld>
                    <Fld $w={184}><Lbl>Obs. pública</Lbl><Area $w={184} $mr={0} /></Fld>
                    <Fld $w={184}><Lbl>O.C.</Lbl><Area $w={184} $mr={0} /></Fld>
                  </FormRow>
                </FormBody>
              </FieldSet>
              <FieldSet $w={1264} $pad="10px 0 0 10px">
                <Legend>Itens</Legend>
                <ToolBar $ml={7} $mt={0}>
                  <ToolItem $w={70} $on>Adicionar</ToolItem>
                  <ToolItem $w={70}>Alterar</ToolItem>
                  <ToolItem $w={70}>Excluir</ToolItem>
                  <ToolItem $w={70}>Salvar</ToolItem>
                  <ToolItem $w={70}>Cancelar</ToolItem>
                  <ToolSep />
                  <ToolItem $w={70} $on>Adici. vários</ToolItem>
                </ToolBar>
                <ItemsWrap>
                  <ItemsGrid>
                    <ItemsBody>
                      <DataTable sel={13} cols={[46, 104, 79, 118, 54, 331, 138, 106, 89, 32, 96]} heads={H4} rows={[]} />
                    </ItemsBody>
                    <ItemsFoot><FootBox /></ItemsFoot>
                    <HScroll>
                      <ScrollBtn><Arrow d="l" /></ScrollBtn>
                      <ScrollThumb><Grip /></ScrollThumb>
                      <span />
                      <ScrollBtn><Arrow d="r" /></ScrollBtn>
                    </HScroll>
                  </ItemsGrid>
                  <InfoStrip>
                    <InfoBtn>»</InfoBtn>
                    <InfoText>Informações</InfoText>
                  </InfoStrip>
                </ItemsWrap>
              </FieldSet>
            </Sets>
            <BottomSets>
              <FieldSet $w={562} $h={135} $pad="10px 0 0 10px">
                <Legend>Frete</Legend>
                <FormRow>
                  <LabelSel w={105} mr={9} l="Tipo do frete" v="Pago pelo vendec" />
                  <ManualCheck w={112} t="P. Líquido manual" />
                  <ManualCheck w={106} t="P. Bruto manual" />
                  <ManualCheck w={95} t="Rateio manual" />
                  <LabelSel w={113} mr={0} l="Frete tipo rateio" v="Por Valor" />
                </FormRow>
                <FormRow>
                  <LabelBox w={105} mr={4} l="Frete" right>R$ 0,00</LabelBox>
                  <LabelBox w={105} mr={4} l="Documento" />
                  <LabelBox w={105} mr={4} l="Peso líquido" />
                  <LabelBox w={105} mr={4} l="Peso bruto" />
                  <LabelBox w={105} mr={4} l="Peso Aferido" />
                </FormRow>
                <FormRow>
                  <LabelBox w={105} mr={4} l="Volumes" />
                  <LabelBox w={105} mr={4} l="Espécie" />
                  <LabelBox w={105} mr={4} l="Numeração" />
                  <LabelBox w={105} mr={4} l="Marca" />
                </FormRow>
              </FieldSet>
              <SetGap />
              <FieldSet $w={236} $h={135} $pad="10px 0 0 10px">
                <Legend>Impostos</Legend>
                <FormRow><LabelBox w={105} mr={4} l="ICMS Base" /><LabelBox w={105} mr={4} l="ICMS Valor" /></FormRow>
                <FormRow><LabelBox w={105} mr={4} l="ICMS ST Base" /><LabelBox w={105} mr={4} l="ICMS ST Valor" /></FormRow>
                <FormRow><LabelBox w={105} mr={4} l="IPI Base" /><LabelBox w={105} mr={4} l="IPI Valor" /></FormRow>
              </FieldSet>
              <SetGap />
              <FieldSet $w={236} $h={135} $pad="10px 0 0 10px">
                <Legend>Totais</Legend>
                <FormRow><LabelBox w={105} mr={4} l="Desconto" /><LabelBox w={105} mr={4} l="Acrésc. cond. pagto." /></FormRow>
                <FormRow><LabelBox w={105} mr={4} l="Valor (produtos)" /><LabelBox w={105} mr={4} l="Despesas" /></FormRow>
                <FormRow><LabelBox w={105} mr={4} l="Retenção" /><LabelBox w={105} mr={4} l="Total" /></FormRow>
              </FieldSet>
            </BottomSets>
          </OrderBody>
        </Frame>
      </Win>

      <Dialog>
        <TitleBar>
          <PersonIcon />
          <TitleText>Tela de Busca</TitleText>
          <WinBtns>
            <WinBtn $w={29}><MinMark /></WinBtn>
            <WinBtn $w={27}><MaxMark /></WinBtn>
            <WinBtn $w={46} $close>X</WinBtn>
          </WinBtns>
        </TitleBar>
        <Client>
          <DlgHead>
            <DlgField>
              <BuscaLbl>Nome&nbsp; <LinkU>contendo</LinkU></BuscaLbl>
              <TextBox>WE</TextBox>
            </DlgField>
            <DlgRight>
              <ToolLink><LinkU>Limpar (F10)</LinkU></ToolLink>
              <ToolLink><LinkU>Salvar Filtros</LinkU></ToolLink>
              <FilterBtn $w={93} $mt={4}>Filtrar (F5)</FilterBtn>
            </DlgRight>
          </DlgHead>
          <DlgPanel>
            <DlgGridCol>
              <DlgSelect><Check on />Selecionar célula</DlgSelect>
              <DlgFrame>
                <DlgCols>
                  <DataTable sel={12} cols={[165, 143, 105, 105, 105, 105]} heads={H3} rows={T3_ROWS} />
                </DlgCols>
                <VScroll>
                  <VBtn><Arrow d="u" /></VBtn>
                  <VTrack />
                  <VThumb><Grip v /></VThumb>
                  <VBtn><Arrow d="d" /></VBtn>
                </VScroll>
              </DlgFrame>
            </DlgGridCol>
            <SideTabs />
          </DlgPanel>
          <DlgStatus>
            <StatusCell>9 registros encontrados</StatusCell>
            <StatusCell />
            <StatusCell $div>Um registro marcado</StatusCell>
          </DlgStatus>
          <DlgActions>
            <ActionBtn $w={72}><u>O</u>K</ActionBtn>
            <ActionBtn $w={73}><u>C</u>ancelar</ActionBtn>
          </DlgActions>
        </Client>
      </Dialog>

      <Highlight $x={187} $y={240} $w={763} $h={50} />
      <Highlight $x={424} $y={675} $w={636} $h={31} />
      <Highlight $x={1188} $y={1459} $w={763} $h={49} />
    </Desktop>
  );
}
